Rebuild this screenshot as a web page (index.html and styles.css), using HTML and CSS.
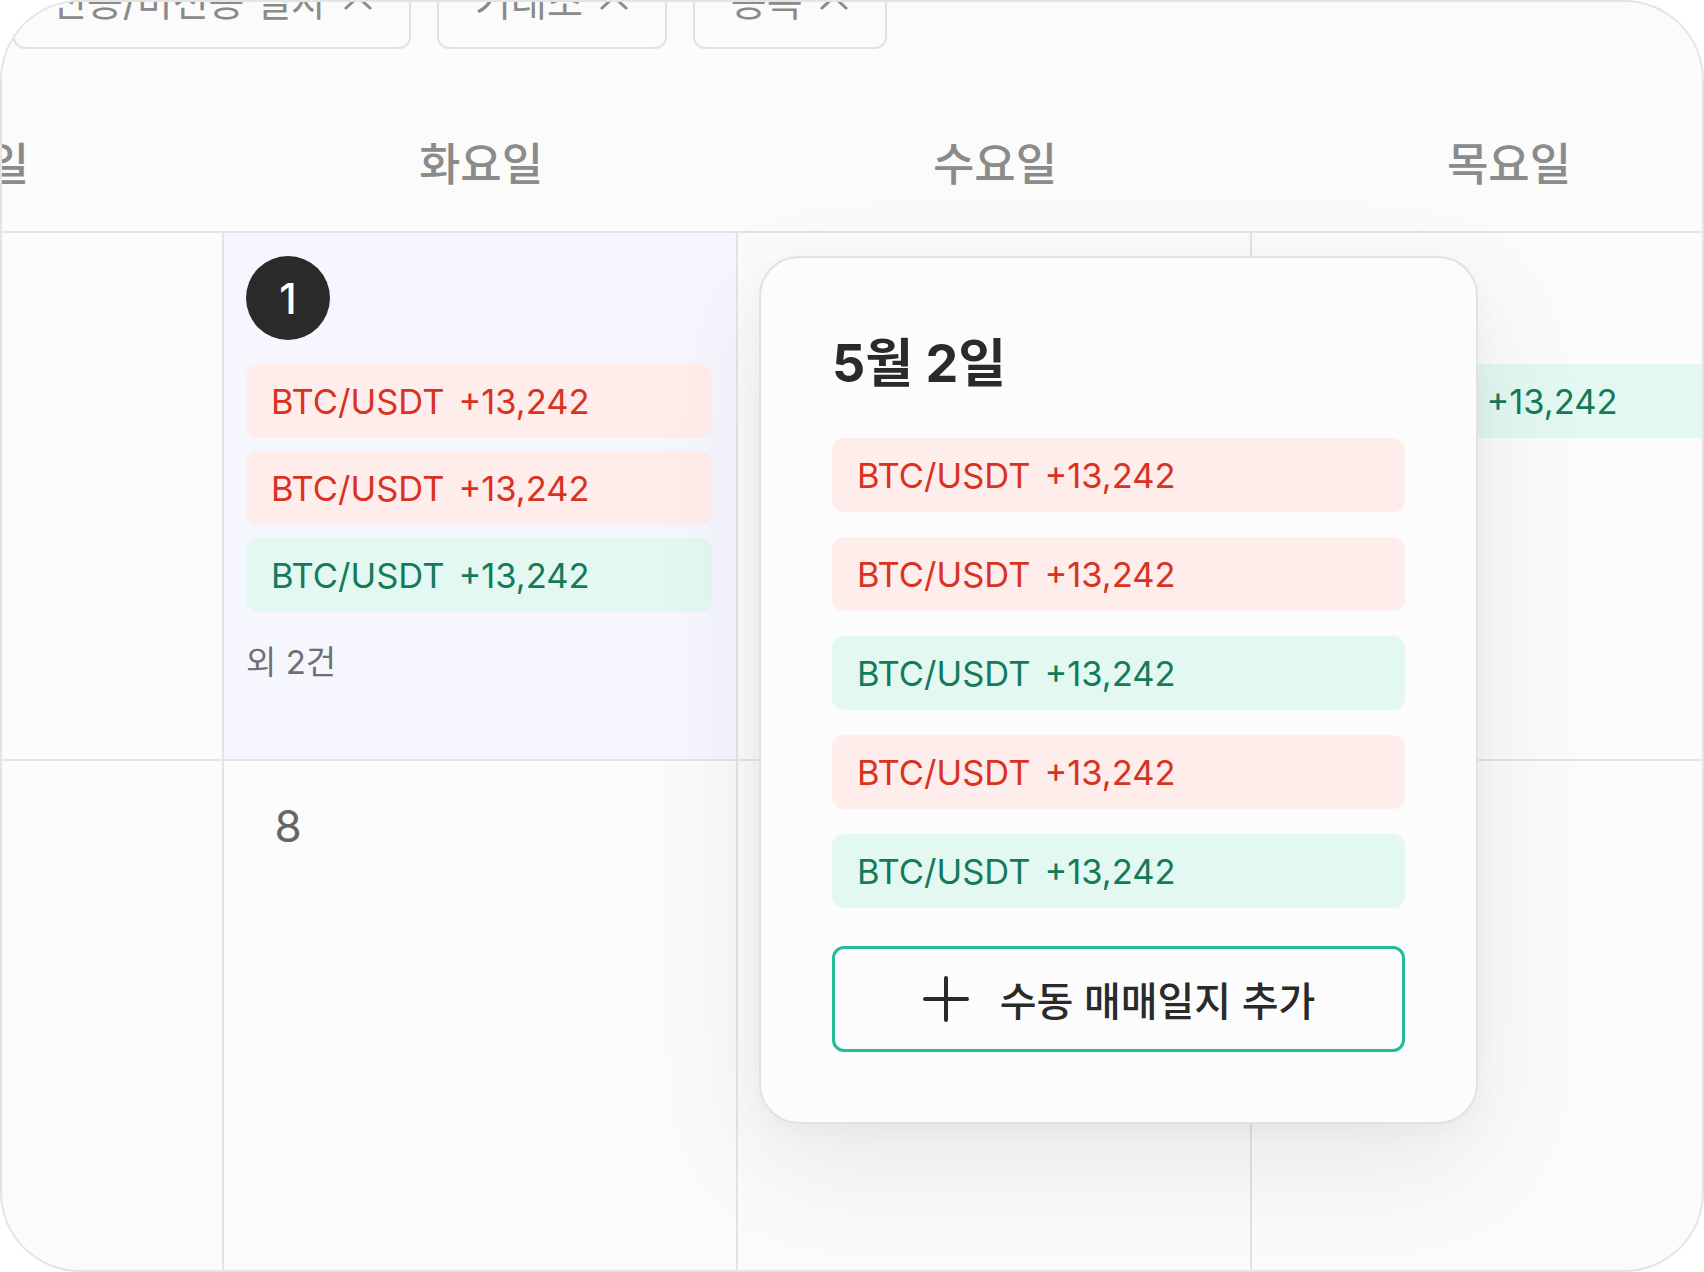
FILE: index.html
```html
<!DOCTYPE html>
<html lang="ko">
<head>
    <meta charset="UTF-8">
    <meta name="viewport" content="width=device-width, initial-scale=1.0">
    <title>매매일지 캘린더</title>
    <link rel="stylesheet" href="styles.css">
</head>
<body>
    <div class="frame">
        <div class="filters">
            <button class="filter" type="button">전송/미전송 일자
                <svg class="chevron" viewBox="0 0 30 18"><path d="M3 15 L15 4 L27 15"/></svg>
            </button>
            <button class="filter" type="button">거래소
                <svg class="chevron" viewBox="0 0 30 18"><path d="M3 15 L15 4 L27 15"/></svg>
            </button>
            <button class="filter" type="button">종목
                <svg class="chevron" viewBox="0 0 30 18"><path d="M3 15 L15 4 L27 15"/></svg>
            </button>
        </div>

        <div class="calendar">
            <div class="week-head">
                <div class="day-name">월요일</div>
                <div class="day-name">화요일</div>
                <div class="day-name">수요일</div>
                <div class="day-name">목요일</div>
            </div>

            <div class="week">
                <div class="cell">
                    <div class="date">30</div>
                </div>
                <div class="cell selected">
                    <div class="date today">1</div>
                    <div class="trades">
                        <div class="trade loss"><span>BTC/USDT</span><span>+13,242</span></div>
                        <div class="trade loss"><span>BTC/USDT</span><span>+13,242</span></div>
                        <div class="trade gain"><span>BTC/USDT</span><span>+13,242</span></div>
                    </div>
                    <div class="more">외 2건</div>
                </div>
                <div class="cell">
                    <div class="date">2</div>
                </div>
                <div class="cell">
                    <div class="date">3</div>
                    <div class="trades">
                        <div class="trade gain"><span>BTC/USDT</span><span>+13,242</span></div>
                    </div>
                </div>
            </div>

            <div class="week last">
                <div class="cell">
                    <div class="date">7</div>
                </div>
                <div class="cell">
                    <div class="date">8</div>
                </div>
                <div class="cell">
                    <div class="date">9</div>
                </div>
                <div class="cell">
                    <div class="date">10</div>
                </div>
            </div>
        </div>

        <!-- day detail popover for 5/2 -->
        <div class="popover">
            <h2>5월 2일</h2>
            <div class="popover-list">
                <div class="trade loss"><span>BTC/USDT</span><span>+13,242</span></div>
                <div class="trade loss"><span>BTC/USDT</span><span>+13,242</span></div>
                <div class="trade gain"><span>BTC/USDT</span><span>+13,242</span></div>
                <div class="trade loss"><span>BTC/USDT</span><span>+13,242</span></div>
                <div class="trade gain"><span>BTC/USDT</span><span>+13,242</span></div>
            </div>
            <button class="add-btn" type="button">
                <svg class="plus" viewBox="0 0 48 48"><path d="M24 3 V45 M3 24 H45"/></svg>
                수동 매매일지 추가
            </button>
        </div>
    </div>
</body>
</html>
```

FILE: styles.css
```css
* {
    box-sizing: border-box;
}

body {
    margin: 0;
    background-color: #ffffff;
    font-family: "Inter", "Noto Sans CJK KR", sans-serif;
}

.frame {
    position: relative;
    width: 1704px;
    height: 1272px;
    border: 2px solid #e4e4e4;
    border-radius: 80px;
    background-color: #fbfbfb;
    overflow: hidden;
}

/* filter buttons, scrolled partly out of view */
.filters {
    display: flex;
    gap: 26px;
    margin-top: -53px;
    padding-left: 11px;
}

.filter {
    display: flex;
    align-items: center;
    gap: 16px;
    height: 100px;
    padding: 0 36px;
    border: 2px solid #e2e2e2;
    border-radius: 12px;
    background-color: #fbfbfb;
    color: #8a8a8a;
    font-family: inherit;
    font-size: 39px;
}

.chevron {
    width: 30px;
    height: 18px;
    margin-top: 6px;
    fill: none;
    stroke: #8a8a8a;
    stroke-width: 3;
    stroke-linecap: round;
    stroke-linejoin: round;
}

.calendar {
    margin-left: -292px;
}

.week-head,
.week {
    display: grid;
    grid-template-columns: repeat(4, 514px);
}

.week-head {
    height: 184px;
    padding-top: 91px;
    border-bottom: 2px solid #e4e4e4;
}

.day-name {
    text-align: center;
    font-size: 45px;
    line-height: 50px;
    font-weight: 500;
    color: #8b8b8b;
}

.week {
    height: 528px;
    border-bottom: 2px solid #e4e4e4;
}

.week.last {
    height: 520px;
    border-bottom: none;
}

.cell {
    padding: 23px 24px 0 22px;
    border-right: 2px solid #e4e4e4;
}

.cell.selected {
    background-color: #f6f7fe;
}

.date {
    width: 84px;
    height: 84px;
    display: flex;
    align-items: center;
    justify-content: center;
    font-size: 44px;
    color: #666666;
}

.date.today {
    border-radius: 50%;
    background-color: #2a2a2a;
    color: #ffffff;
    font-size: 42px;
    font-weight: 500;
}

.trades {
    display: flex;
    flex-direction: column;
    gap: 13px;
    margin-top: 24px;
}

.trade {
    display: flex;
    align-items: center;
    gap: 14px;
    height: 74px;
    padding-left: 25px;
    border-radius: 12px;
    font-size: 34.5px;
}

.trade.loss {
    background-color: #ffedeb;
    color: #d83222;
}

.trade.gain {
    background-color: #e3f8f0;
    color: #137a5b;
}

.more {
    margin-top: 30px;
    font-size: 33px;
    line-height: 40px;
    color: #707070;
}

.popover {
    position: absolute;
    left: 757px;
    top: 254px;
    width: 719px;
    padding: 76px 71px 70px 71px;
    border: 2px solid #e2e2e2;
    border-radius: 40px;
    background-color: #fcfcfc;
    box-shadow: 0 40px 120px rgba(0, 0, 0, 0.08), 0 8px 24px rgba(0, 0, 0, 0.03);
}

.popover h2 {
    margin: 0;
    font-size: 52px;
    line-height: 60px;
    font-weight: 700;
    color: #2a2a2a;
}

.popover-list {
    display: flex;
    flex-direction: column;
    gap: 25px;
    margin-top: 44px;
}

.add-btn {
    display: flex;
    align-items: center;
    justify-content: center;
    gap: 30px;
    width: 100%;
    height: 106px;
    margin-top: 38px;
    border: 3px solid #22bd96;
    border-radius: 12px;
    background-color: #fcfcfc;
    color: #2a2a2a;
    font-family: inherit;
    font-size: 40px;
    font-weight: 500;
}

.plus {
    width: 48px;
    height: 48px;
    fill: none;
    stroke: #2a2a2a;
    stroke-width: 4;
    stroke-linecap: round;
}
```
